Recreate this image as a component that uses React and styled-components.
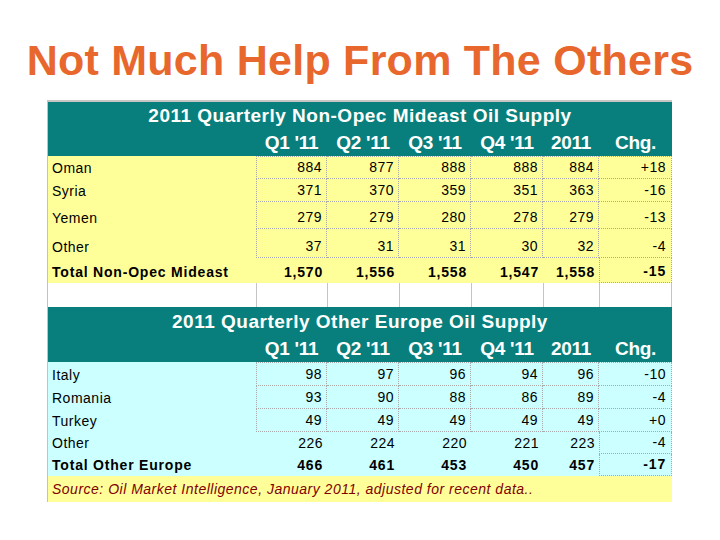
import React from "react";
import styled, { createGlobalStyle, css } from "styled-components";

const Global = createGlobalStyle`
  html, body { margin: 0; padding: 0; background: #ffffff; }
  body {
    width: 720px;
    height: 540px;
    overflow: hidden;
    font-family: "Liberation Sans", Arial, sans-serif;
  }
`;

const Slide = styled.div`
  width: 720px;
  height: 540px;
  display: flex;
  flex-direction: column;
  align-items: center;
`;

const Title = styled.h1`
  margin: 39px 0 0;
  font: bold 43px/43px "Liberation Sans", Arial, sans-serif;
  letter-spacing: 0.25px;
  color: #e8672d;
  white-space: nowrap;
`;

const Sheet = styled.div`
  align-self: flex-start;
  margin: 18px 0 0 47px;
  width: 624px;
  border-top: 2px solid #c6c6c6;
  border-left: 1px solid #c2c2c2;
  display: flex;
  flex-direction: column;
`;

const Grid = styled.div`
  display: grid;
  grid-template-columns: 208px 71px 72px 72px 72px 56px 73px;
  background: ${(p) => p.$bg || "transparent"};
`;

const Header = styled(Grid)`
  background: #087f7c;
  color: #ffffff;
`;

const HeadTitle = styled.div`
  grid-column: 1 / -1;
  height: ${(p) => p.$h}px;
  display: flex;
  align-items: center;
  justify-content: center;
  font-size: 19px;
  font-weight: bold;
  letter-spacing: 0.5px;
  white-space: nowrap;
`;

const ColHead = styled.div`
  height: 26px;
  display: flex;
  align-items: center;
  justify-content: center;
  font-size: 19px;
  font-weight: bold;
  letter-spacing: -0.3px;
  white-space: nowrap;
`;

const dots = "1px dotted #a9a9a9";

const Cell = styled.div`
  box-sizing: border-box;
  height: ${(p) => p.$h}px;
  display: flex;
  align-items: flex-end;
  justify-content: ${(p) => (p.$num ? "flex-end" : "flex-start")};
  padding: 0 ${(p) => (p.$chg ? 5 : 4)}px 3px 4px;
  font-size: 14px;
  line-height: 16px;
  letter-spacing: ${(p) => (p.$bold ? "0.8px" : "0.5px")};
  font-weight: ${(p) => (p.$bold ? "bold" : "normal")};
  color: #000000;
  white-space: nowrap;
  ${(p) =>
    p.$box &&
    css`
      border-right: ${dots};
      border-bottom: ${dots};
    `}
  ${(p) => p.$boxLeft && css`border-left: ${dots};`}
  ${(p) => p.$boxTop && css`border-top: ${dots};`}
`;

const Spacer = styled.div`
  box-sizing: border-box;
  height: 24px;
  background: #ffffff;
  border-left: ${(p) => (p.$first ? "none" : "1px solid #c4c4c4")};
  border-right: ${(p) => (p.$last ? "1px solid #c4c4c4" : "none")};
`;

const Source = styled.div`
  grid-column: 1 / -1;
  height: 26px;
  display: flex;
  align-items: center;
  padding-left: 4px;
  background: #ffff99;
  color: #800000;
  font-size: 14px;
  font-style: italic;
  letter-spacing: 0.5px;
  white-space: nowrap;
`;

const cols = ["Q1 '11", "Q2 '11", "Q3 '11", "Q4 '11", "2011", "Chg."];

const mideast = [
  { label: "Oman", v: ["884", "877", "888", "888", "884", "+18"], h: 23, box: true },
  { label: "Syria", v: ["371", "370", "359", "351", "363", "-16"], h: 23, box: true },
  { label: "Yemen", v: ["279", "279", "280", "278", "279", "-13"], h: 27, box: true },
  { label: "Other", v: ["37", "31", "31", "30", "32", "-4"], h: 29, box: true },
  { label: "Total Non-Opec Mideast", v: ["1,570", "1,556", "1,558", "1,547", "1,558", "-15"], h: 25, bold: true },
];

const europe = [
  { label: "Italy", v: ["98", "97", "96", "94", "96", "-10"], h: 24, box: true },
  { label: "Romania", v: ["93", "90", "88", "86", "89", "-4"], h: 23, box: true },
  { label: "Turkey", v: ["49", "49", "49", "49", "49", "+0"], h: 23, box: true },
  { label: "Other", v: ["226", "224", "220", "221", "223", "-4"], h: 22 },
  { label: "Total Other Europe", v: ["466", "461", "453", "450", "457", "-17"], h: 22, bold: true },
];

function TableHeader({ title, titleH }) {
  return (
    <Header>
      <HeadTitle $h={titleH}>{title}</HeadTitle>
      <ColHead />
      {cols.map((c) => (
        <ColHead key={c}>{c}</ColHead>
      ))}
    </Header>
  );
}

function DataRows({ rows, bg, children }) {
  return (
    <Grid $bg={bg}>
      {rows.map((r, ri) => (
        <React.Fragment key={r.label + ri}>
          <Cell $h={r.h} $bold={r.bold}>
            {r.label}
          </Cell>
          {r.v.map((val, ci) => {
            const isChg = ci === 5;
            const boxed = isChg || r.box;
            return (
              <Cell
                key={ci}
                $h={r.h}
                $num
                $chg={isChg}
                $bold={r.bold}
                $box={boxed}
                $boxLeft={(boxed && ci === 0) || (isChg && !r.box)}
                $boxTop={ri === 0 && boxed}
              >
                {val}
              </Cell>
            );
          })}
        </React.Fragment>
      ))}
      {children}
    </Grid>
  );
}

export default function App() {
  return (
    <>
      <Global />
      <Slide>
        <Title>Not Much Help From The Others</Title>
        <Sheet>
          <TableHeader title="2011 Quarterly Non-Opec Mideast Oil Supply" titleH={28} />
          <DataRows rows={mideast} bg="#ffff99" />
          <Grid>
            {Array.from({ length: 7 }).map((_, i) => (
              <Spacer key={i} $first={i === 0} $last={i === 6} />
            ))}
          </Grid>
          <TableHeader title="2011 Quarterly Other Europe Oil Supply" titleH={29} />
          <DataRows rows={europe} bg="#ccffff">
            <Source>Source: Oil Market Intelligence, January 2011, adjusted for recent data..</Source>
          </DataRows>
        </Sheet>
      </Slide>
    </>
  );
}
